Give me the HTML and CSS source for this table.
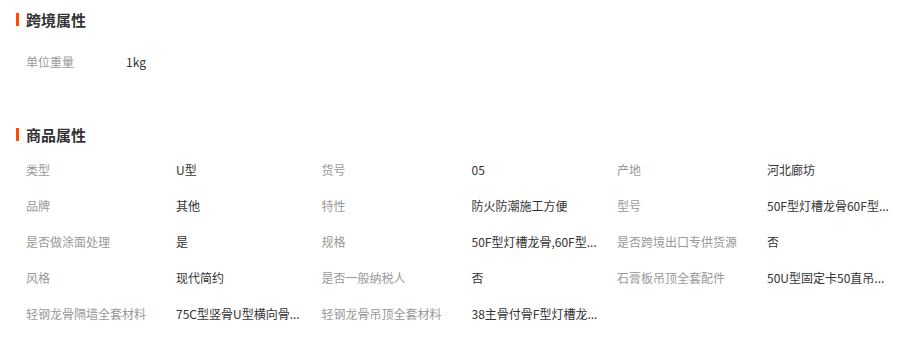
FILE: index.html
```html
<!DOCTYPE html>
<html lang="zh-CN">
<head>
<meta charset="utf-8">
<title>属性</title>
<link rel="stylesheet" href="styles.css">
</head>
<body>
<div class="page">
  <section class="block">
    <h2 class="title"><span class="bar"></span>跨境属性</h2>
    <div class="simple-row">
      <span class="label narrow">单位重量</span>
      <span class="value">1kg</span>
    </div>
  </section>

  <section class="block second">
    <h2 class="title"><span class="bar"></span>商品属性</h2>
    <div class="grid">
      <span class="label">类型</span><span class="value">U型</span>
      <span class="label">货号</span><span class="value">05</span>
      <span class="label">产地</span><span class="value">河北廊坊</span>

      <span class="label">品牌</span><span class="value">其他</span>
      <span class="label">特性</span><span class="value">防火防潮施工方便</span>
      <span class="label">型号</span><span class="value">50F型灯槽龙骨60F型...</span>

      <span class="label">是否做涂面处理</span><span class="value">是</span>
      <span class="label">规格</span><span class="value">50F型灯槽龙骨,60F型...</span>
      <span class="label">是否跨境出口专供货源</span><span class="value">否</span>

      <span class="label">风格</span><span class="value">现代简约</span>
      <span class="label">是否一般纳税人</span><span class="value">否</span>
      <span class="label">石膏板吊顶全套配件</span><span class="value">50U型固定卡50直吊...</span>

      <span class="label">轻钢龙骨隔墙全套材料</span><span class="value">75C型竖骨U型横向骨...</span>
      <span class="label">轻钢龙骨吊顶全套材料</span><span class="value">38主骨付骨F型灯槽龙...</span>
    </div>
  </section>
</div>
</body>
</html>
```

FILE: styles.css
```css
html, body {
  margin: 0;
  padding: 0;
  background: #fff;
}

body {
  font-family: "Microsoft YaHei", "Noto Sans CJK SC", "Liberation Sans", sans-serif;
  font-size: 12px;
  color: #333;
}

.page {
  width: 918px;
  height: 340px;
  padding-top: 9px;
  box-sizing: border-box;
  overflow: hidden;
}

.title {
  display: flex;
  align-items: center;
  gap: 7px;
  margin: 0;
  padding-left: 16px;
  height: 20px;
  font-size: 15px;
  font-weight: bold;
  color: #333;
}

.bar {
  width: 3px;
  height: 13px;
  background: #ff4a00;
}

.simple-row {
  display: flex;
  align-items: center;
  height: 36px;
  margin-top: 14px;
  padding-left: 26px;
}

.label {
  color: #999;
  white-space: nowrap;
}

.label.narrow {
  width: 100px;
}

.value {
  color: #333;
  white-space: nowrap;
}

.second {
  margin-top: 45px;
}

.grid {
  display: grid;
  grid-template-columns: 150px 145.5px 150px 145.5px 150px 145.5px;
  grid-auto-rows: 35.8px;
  align-items: center;
  margin-top: 8px;
  padding-left: 26px;
}
```
